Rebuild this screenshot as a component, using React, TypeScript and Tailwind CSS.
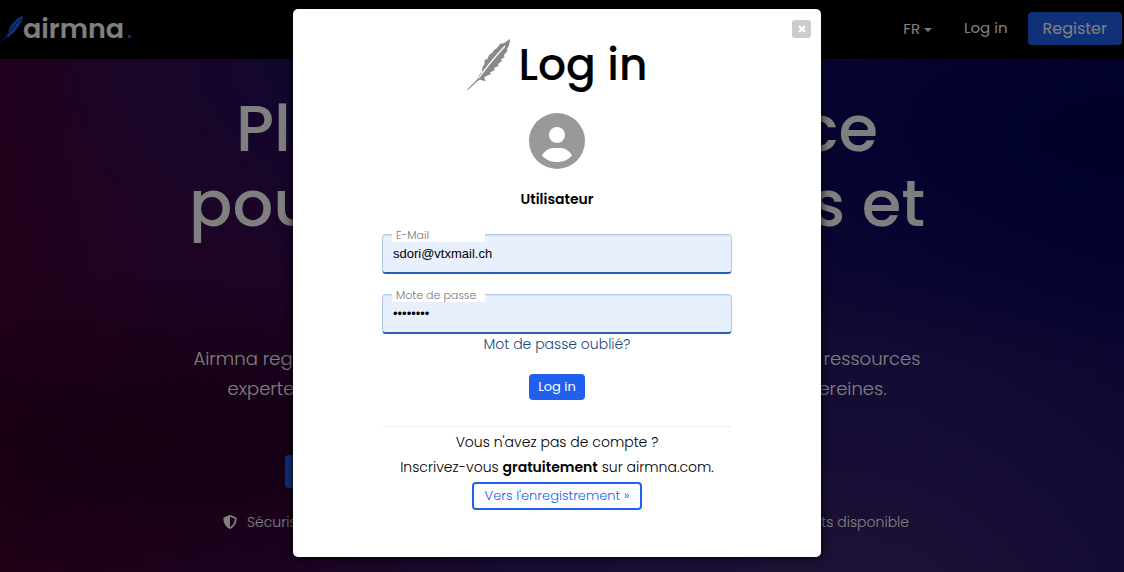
import { FaShieldHalved } from "react-icons/fa6";

function Feather({ className }: { className: string }) {
  return (
    <svg viewBox="0 0 44 52" aria-hidden="true" className={className}>
      {/* the mask cuts the light shaft out of the vane */}
      <mask id="shaft">
        <rect width="44" height="52" fill="#fff" />
        <path d="M13 39C19 30 28 19 39 7" fill="none" stroke="#000" strokeWidth="1.2" />
      </mask>
      <path
        mask="url(#shaft)"
        fill="currentColor"
        d="M0 52C3 48 8 44 11.5 40L14 35L16 33L16.5 28L18.5 25L18.5 21L21.5 20L23 16L26 14L28 11L31 9L34 5L38 4L44 0C44 4 43 7 41 10L41.5 12L38 16L38.5 18L35 20.5L36 22L32 25L32.5 27L28 29L29 31L24 33.5L25 35L19.5 37.5L18 39L20 42C17 42 15 40 13 41C9 44 5 49 0 52Z"
      />
    </svg>
  );
}

function UserAvatar() {
  return (
    <svg viewBox="0 0 56 56" aria-hidden="true" className="h-14 w-14">
      <circle cx="28" cy="28" r="28" fill="#999" />
      <circle cx="28" cy="22" r="8" fill="#fff" />
      <path d="M13 42.5C16 37.5 20 35 25 35H31C36 35 40 37.5 43 42.5C39 47 34 49 28 49S17 47 13 42.5Z" fill="#fff" />
    </svg>
  );
}

function Field({
  id,
  label,
  type,
  value,
}: {
  id: string;
  label: string;
  type: string;
  value: string;
}) {
  return (
    <div className="relative">
      <label
        htmlFor={id}
        className="absolute top-[-6px] left-2.5 w-[93px] bg-white pl-1 text-[11px] leading-[14px] font-light text-[#777]"
      >
        {label}
      </label>
      <input
        id={id}
        type={type}
        defaultValue={value}
        className="block h-10 w-full rounded border border-b-2 border-[#b0c8e8] border-b-[#2660b4] bg-[#e8f0fe] px-2.5 font-['Liberation_Sans',sans-serif] text-[13px] text-black shadow-[inset_0_1px_1px_#d4e0f2] outline-none"
      />
    </div>
  );
}

function Header() {
  return (
    <header className="flex h-[59px] items-center justify-between bg-black pr-0.5 pb-0.5">
      <a href="#" className="flex items-center text-[27px] leading-8 font-semibold">
        <Feather className="h-[30px] w-[23px] text-[#2160ef]" />
        airmna
        <span className="ml-1 h-[3px] w-[3px] translate-y-2 bg-[#2160ef]" />
      </a>
      <nav className="flex items-center text-base">
        <button className="flex items-center gap-1 pt-0.5 text-[15px]">
          FR
          <span className="border-x-4 border-t-4 border-x-transparent border-t-white" />
        </button>
        <a href="#" className="mr-5 ml-8 text-[15px]">
          Log in
        </a>
        <a href="#" className="rounded bg-[#2160ef] px-[15px] py-1 leading-[25px]">
          Register
        </a>
      </nav>
    </header>
  );
}

function Hero() {
  return (
    <main className="flex flex-1 flex-col items-center bg-[radial-gradient(ellipse_at_12%_75%,#2c0024_0%,rgba(44,0,36,0.7)_12%,transparent_32%),radial-gradient(ellipse_at_100%_15%,#000058_0%,transparent_38%),radial-gradient(ellipse_at_75%_110%,#40246c_0%,transparent_50%),radial-gradient(ellipse_at_32%_0%,#220e60_0%,transparent_30%),linear-gradient(78deg,#48002e_0%,#3c0848_18%,#38084c_28%,#1e1060_45%,#181068_75%,#0c0860_100%)] pt-8 pr-2.5">
      <h1 className="flex flex-col items-center text-[64px] leading-[75px] font-medium">
        <span className="flex w-[642px] justify-between">
          <span>Place</span> <span>de confiance</span>
        </span>
        <span className="flex w-[736px] justify-between">
          <span>pour</span> <span>entreprises et</span>
        </span>
      </h1>
      <div className="mt-[103px] flex flex-col items-center text-lg leading-[30px] font-light">
        <p className="flex w-[727px] justify-between">
          <span>Airmna regroupe les</span> <span>meilleures ressources</span>
        </p>
        <p className="flex w-[659px] justify-between">
          <span>expertes pour des</span> <span>entreprises sereines.</span>
        </p>
      </div>
      <div className="mt-[51px] flex w-[544px]">
        <a href="#" className="rounded bg-[#2160ef] px-4 py-1 leading-[25px]">
          Commencer
        </a>
      </div>
      <ul className="mt-6 flex w-[704px] justify-between pl-[18px] text-sm font-light">
        <li className="flex items-center gap-2.5">
          <FaShieldHalved className="h-3.5 w-3.5" />
          Sécurisé
        </li>
        <li>Experts disponible</li>
      </ul>
    </main>
  );
}

function LoginDialog() {
  return (
    <div className="absolute inset-0 flex items-start justify-center bg-black/50 pt-[9px] pr-2.5">
      <section
        role="dialog"
        aria-labelledby="login-title"
        className="relative w-[528px] rounded-[5px] bg-white pt-7 pb-[47px] text-sm text-black shadow-[0_0_10px_#000]"
      >
        <button
          aria-label="Fermer"
          className="absolute top-[11px] right-2.5 flex h-[18px] w-[19px] items-center justify-center rounded-[3px] bg-[#ccc] text-white"
        >
          <svg viewBox="0 0 8 8" aria-hidden="true" className="h-2 w-2">
            <path d="M1 1L7 7M7 1L1 7" stroke="currentColor" strokeWidth="2.4" />
          </svg>
        </button>
        <div className="mx-auto flex w-[350px] flex-col items-center">
          <h2 id="login-title" className="flex items-center gap-2 text-[44px] leading-[56px] font-medium">
            <Feather className="h-[52px] w-11 text-[#8a8a88]" />
            Log in
          </h2>
          <div className="mt-5">
            <UserAvatar />
          </div>
          <p className="mt-5 leading-5 font-semibold">Utilisateur</p>
          <form className="mt-[25px] flex w-full flex-col items-center">
            <div className="flex w-full flex-col gap-5">
              <Field id="email" label="E-Mail" type="email" value="sdori@vtxmail.ch" />
              <Field id="password" label="Mote de passe" type="password" value="password" />
            </div>
            <a href="#" className="leading-5 font-light text-[#1c4a80]">
              Mot de passe oublié?
            </a>
            <button type="button" className="mt-5 rounded bg-[#2160ef] px-[9px] text-[13px] leading-[26px] text-white">
              Log in
            </button>
          </form>
          <div className="mt-[26px] flex w-full flex-col items-center border-t border-[#eee] pt-[3px] leading-[25px] font-light">
            <p>Vous n'avez pas de compte ?</p>
            <p>
              Inscrivez-vous <b className="font-semibold">gratuitement</b> sur airmna.com.
            </p>
            <a href="#" className="mt-[2px] rounded border-2 border-[#2160ef] px-[11px] text-[13px] leading-6 text-[#2160ef]">
              Vers l'enregistrement »
            </a>
          </div>
        </div>
      </section>
    </div>
  );
}

export default function App() {
  return (
    <div className="relative flex min-h-screen flex-col bg-black font-[Poppins,Inter,sans-serif] text-white">
      <Header />
      <Hero />
      <LoginDialog />
    </div>
  );
}
